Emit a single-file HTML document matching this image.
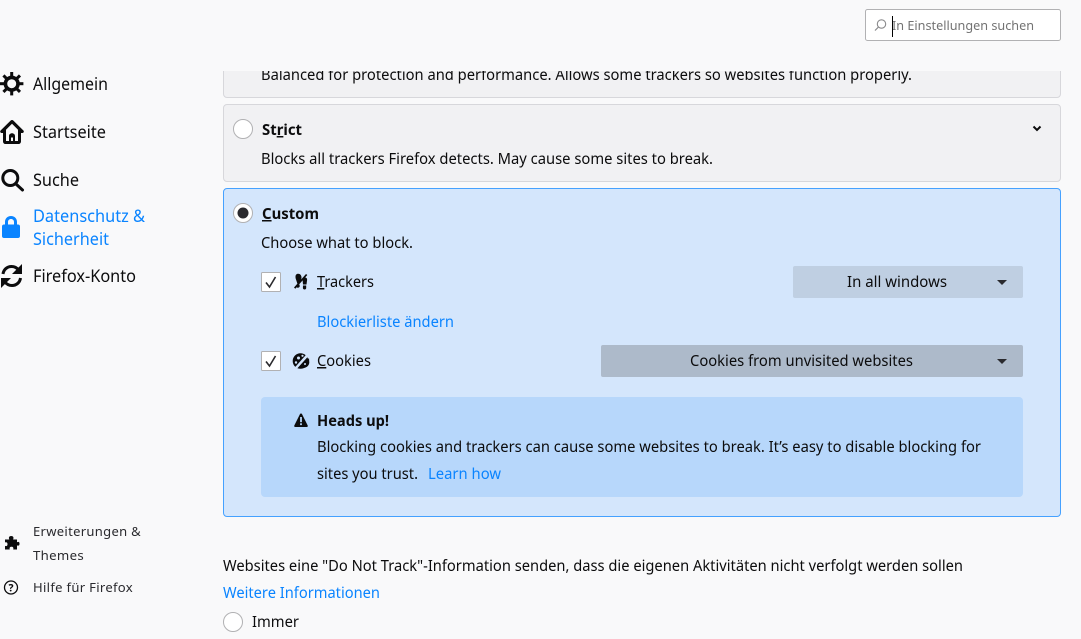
<!DOCTYPE html>
<html lang="de"><head><meta charset="utf-8"><title>Einstellungen</title>
<style>
html,body{margin:0;padding:0;background:#f9f9fa;width:1081px;height:639px;overflow:hidden}
svg{display:block;position:absolute;left:0;top:0}
text{font-family:"Noto Sans","DejaVu Sans","Liberation Sans",sans-serif;font-size:15px;fill:#0c0c0d;white-space:pre}
.b{font-weight:700}.l{fill:#0a84ff}.n{font-size:17px}.s{font-size:13px;letter-spacing:.3px;fill:#2a2a2e}
.u{text-decoration:underline}
</style></head><body>
<svg width="1081" height="639" viewBox="0 0 1081 639" xmlns="http://www.w3.org/2000/svg">
<rect width="1081" height="639" fill="#f9f9fa"/>
<!-- cards -->
<rect x="223.5" y="40.5" width="837" height="57" rx="3.5" fill="#f1f1f3" stroke="#d7d7db"/>
<text x="261" y="80" textLength="651" lengthAdjust="spacingAndGlyphs">Balanced for protection and performance. Allows some trackers so websites function properly.</text>
<rect x="0" y="0" width="1081" height="71" fill="#f9f9fa"/>
<rect x="223.5" y="104.5" width="837" height="77" rx="3.5" fill="#f1f1f3" stroke="#d7d7db"/>
<circle cx="243" cy="129" r="9.5" fill="#fff" stroke="#b1b1b3"/>
<text class="b" x="262" y="135" textLength="40" lengthAdjust="spacingAndGlyphs">St<tspan class="u">r</tspan>ict</text>
<path d="M1033.5 126.5l3.500 3.500 3.500-3.500" fill="none" stroke="#0c0c0d" stroke-width="2"/>
<text x="261" y="164" textLength="452" lengthAdjust="spacingAndGlyphs">Blocks all trackers Firefox detects. May cause some sites to break.</text>

<rect x="223.5" y="188.5" width="837" height="328" rx="3.5" fill="#d4e6fc" stroke="#45a1ff"/>
<circle cx="243" cy="213" r="9.5" fill="#fff" stroke="#b1b1b3"/>
<circle cx="243" cy="213" r="5.5" fill="#2a2a2e"/>
<text class="b" x="262" y="219" textLength="57" lengthAdjust="spacingAndGlyphs"><tspan class="u">C</tspan>ustom</text>
<text x="261" y="248" textLength="152" lengthAdjust="spacingAndGlyphs">Choose what to block.</text>

<!-- trackers row -->
<rect x="261.5" y="272.5" width="19" height="19" rx="1" fill="#fff" stroke="#b1b1b3"/>
<path d="M266 282.5l3.500 4.500 6-10" fill="none" stroke="#2a2a2e" stroke-width="1.6"/>
<g fill="#0c0c0d">
<path d="M297 274c2.500-.8 4.500 1 4.500 3.500l-.5 4-3.500 2.500-1.500-4.500c-.7-2-.9-4.800 1-5.500z"/>
<path d="M296 285.500l3.500-1 .2 1.800c0 1.700-3.200 2-3.700.2z"/>
<path d="M304.500 277.500c1.600-.2 2.800.8 2.600 2.500l-.6 4.500h-3.500l-.4-4.500c0-1.300.7-2.400 1.900-2.500z"/>
<path d="M303 285.500h3.200v2.500c0 2-3.300 2-3.300 0z"/>
<path d="M294 287.500l12-13.500 1.300 1-12 13.800z"/>
</g>
<text x="317" y="287" textLength="57" lengthAdjust="spacingAndGlyphs"><tspan class="u">T</tspan>rackers</text>
<rect x="793" y="266" width="230" height="32" rx="2" fill="#bfcfe2"/>
<text x="847" y="287" textLength="100" lengthAdjust="spacingAndGlyphs">In all windows</text>
<path d="M997 280h10l-5 5z" fill="#2a2a2e"/>

<text class="l" x="317" y="327" textLength="137" lengthAdjust="spacingAndGlyphs">Blockierliste ändern</text>

<!-- cookies row -->
<rect x="261.500" y="351.500" width="19" height="19" rx="1" fill="#fff" stroke="#b1b1b3"/>
<path d="M266 361.500l3.500 4.500 6-10" fill="none" stroke="#2a2a2e" stroke-width="1.600"/>
<g>
<circle cx="300.500" cy="361" r="7.800" fill="#0c0c0d"/>
<path d="M310 353l-15 16.500" stroke="#d4e6fc" stroke-width="1.800"/>
<path d="M309 358l-8.500 10c4.500.8 8.500-1.500 8.800-5.500z" fill="#0c0c0d"/>
<path d="M309.500 352l-15 17" stroke="#d4e6fc" stroke-width="1.500"/>
<circle cx="298.500" cy="358" r="1.500" fill="#d4e6fc"/><circle cx="302.500" cy="355.800" r="1.100" fill="#d4e6fc"/><circle cx="296" cy="362.500" r="1.200" fill="#d4e6fc"/><circle cx="305" cy="364" r="1" fill="#d4e6fc"/>
</g>
<text x="317" y="366" textLength="54" lengthAdjust="spacingAndGlyphs"><tspan class="u">C</tspan>ookies</text>
<rect x="601" y="345" width="422" height="32" rx="2" fill="#adbaca"/>
<text x="690" y="366" textLength="223" lengthAdjust="spacingAndGlyphs">Cookies from unvisited websites</text>
<path d="M997 359h10l-5 5z" fill="#2a2a2e"/>

<!-- heads up -->
<rect x="261" y="397" width="762" height="100" rx="4" fill="#b7d7fb"/>
<path d="M301 413.500c.500 0 .9.300 1.100.700l5.600 11.300c.4.800-.1 1.500-1 1.500h-11.400c-.9 0-1.400-.7-1-1.500l5.600-11.300c.2-.4.600-.7 1.100-.7z" fill="#0c0c0d"/>
<rect x="300.100" y="417" width="1.800" height="5.200" fill="#b7d7fb"/><rect x="300.100" y="423.300" width="1.800" height="1.800" fill="#b7d7fb"/>
<text class="b" x="317" y="426" textLength="72" lengthAdjust="spacingAndGlyphs">Heads up!</text>
<text x="317" y="452" textLength="664" lengthAdjust="spacingAndGlyphs">Blocking cookies and trackers can cause some websites to break. It’s easy to disable blocking for</text>
<text x="317" y="479" textLength="101" lengthAdjust="spacingAndGlyphs">sites you trust.</text>
<text class="l" x="428" y="479" textLength="73" lengthAdjust="spacingAndGlyphs">Learn how</text>

<!-- DNT -->
<text x="223" y="571" textLength="740" lengthAdjust="spacingAndGlyphs">Websites eine "Do Not Track"-Information senden, dass die eigenen Aktivitäten nicht verfolgt werden sollen</text>
<text class="l" x="223" y="598" textLength="157" lengthAdjust="spacingAndGlyphs">Weitere Informationen</text>
<circle cx="233" cy="622" r="9.500" fill="#fff" stroke="#b1b1b3"/>
<text x="252" y="627" textLength="47" lengthAdjust="spacingAndGlyphs">Immer</text>

<!-- nav: gear -->
<g transform="translate(11.700,83.700)" fill="#0c0c0d">
<circle r="6.300" fill="none" stroke="#0c0c0d" stroke-width="3.600"/>
<rect x="-1.500" y="-11.700" width="3" height="5"/>
<rect x="-1.500" y="-11.700" width="3" height="5" transform="rotate(45)"/>
<rect x="-1.500" y="-11.700" width="3" height="5" transform="rotate(90)"/>
<rect x="-1.500" y="-11.700" width="3" height="5" transform="rotate(135)"/>
<rect x="-1.500" y="-11.700" width="3" height="5" transform="rotate(180)"/>
<rect x="-1.500" y="-11.700" width="3" height="5" transform="rotate(225)"/>
<rect x="-1.500" y="-11.700" width="3" height="5" transform="rotate(270)"/>
<rect x="-1.500" y="-11.700" width="3" height="5" transform="rotate(315)"/>
</g>
<!-- home -->
<path fill-rule="evenodd" fill="#0c0c0d" d="M12 120c.5 0 1 .2 1.400.6l10 9.900c.9.900.3 2.500-1 2.500H21v8.200c0 1.700-1 2.800-2.600 2.800H5.600C4 144 3 142.900 3 141.200V133H1.600c-1.300 0-1.900-1.600-1-2.500l10-9.900c.4-.4.900-.6 1.400-.6zM12 123.700l-6 6V141h3v-5c0-1.700 1.300-2.800 3-2.800s3 1.100 3 2.800v5h3v-11.300zM11 137.500h2v3.500h-2z"/>
<!-- search -->
<circle cx="10.300" cy="178" r="7.500" fill="none" stroke="#0c0c0d" stroke-width="3"/>
<path d="M16 184l6.500 6" stroke="#0c0c0d" stroke-width="3" stroke-linecap="round"/>
<!-- lock -->
<path fill-rule="evenodd" d="M11 216c-3.600 0-6 2.600-6 6v2.500H4c-1.200 0-2 .8-2 2V236c0 1.200.8 2 2 2h14c1.200 0 2-.8 2-2v-9.500c0-1.200-.8-2-2-2h-1V222c0-3.400-2.400-6-6-6zM8 224.500V222c0-1.800 1.200-3 3-3s3 1.200 3 3v2.500z" fill="#0a84ff"/>
<!-- sync -->
<g fill="none" stroke="#0c0c0d" stroke-width="3">
<path d="M3 274c.6-4.500 4.200-7.500 8.500-7.500 2.900 0 5.400 1.300 7 3.500"/>
<path d="M20.500 278c-.6 4.500-4.200 7.500-8.500 7.500-2.900 0-5.400-1.300-7-3.500"/>
</g>
<path d="M22 264v10h-10zM1 288v-10h10z" fill="#0c0c0d"/>
<text class="n" x="33" y="90" textLength="75" lengthAdjust="spacingAndGlyphs">Allgemein</text>
<text class="n" x="33" y="138" textLength="73" lengthAdjust="spacingAndGlyphs">Startseite</text>
<text class="n" x="33" y="186" textLength="46" lengthAdjust="spacingAndGlyphs">Suche</text>
<text class="n l" x="33" y="222" textLength="112" lengthAdjust="spacingAndGlyphs">Datenschutz &amp;</text>
<text class="n l" x="33" y="245" textLength="76" lengthAdjust="spacingAndGlyphs">Sicherheit</text>
<text class="n" x="33" y="282" textLength="103" lengthAdjust="spacingAndGlyphs">Firefox-Konto</text>

<!-- puzzle -->
<path d="M5 539.500h4.300c-.9-2-.2-3.500 1.900-3.500s2.800 1.500 1.900 3.500H17v2.700c2-.8 2.500.2 2.500 1.600s-.5 2.400-2.500 1.600V549.500h-3.800c.6-1.800-.2-2.800-1.700-2.800s-2.300 1-1.700 2.800H5v-3.600c1.700.6 2.500-.3 2.500-1.700s-.8-2.300-2.500-1.700z" fill="#0c0c0d"/>
<text class="s" x="33" y="536" textLength="108" lengthAdjust="spacingAndGlyphs">Erweiterungen &amp;</text>
<text class="s" x="33" y="560" textLength="51" lengthAdjust="spacingAndGlyphs">Themes</text>
<circle cx="11" cy="587.500" r="6.500" fill="none" stroke="#0c0c0d" stroke-width="1.300"/>
<text x="11" y="591.500" text-anchor="middle" style="font-size:10.500px;font-weight:700">?</text>
<text class="s" x="33" y="592" textLength="100" lengthAdjust="spacingAndGlyphs">Hilfe für Firefox</text>

<!-- search box -->
<rect x="865.500" y="9.500" width="195" height="31" rx="2" fill="#fff" stroke="#b1b1b3"/>
<circle cx="881.500" cy="24" r="4.200" fill="none" stroke="#8a8a8c" stroke-width="1.100"/>
<path d="M878.500 27l-3.500 3.500" stroke="#8a8a8c" stroke-width="1.200"/>
<text x="892" y="30" textLength="142" lengthAdjust="spacingAndGlyphs" style="font-size:13px;fill:#737373">In Einstellungen suchen</text>
<rect x="892" y="16" width="1" height="21" fill="#000"/>
</svg>
</body></html>
